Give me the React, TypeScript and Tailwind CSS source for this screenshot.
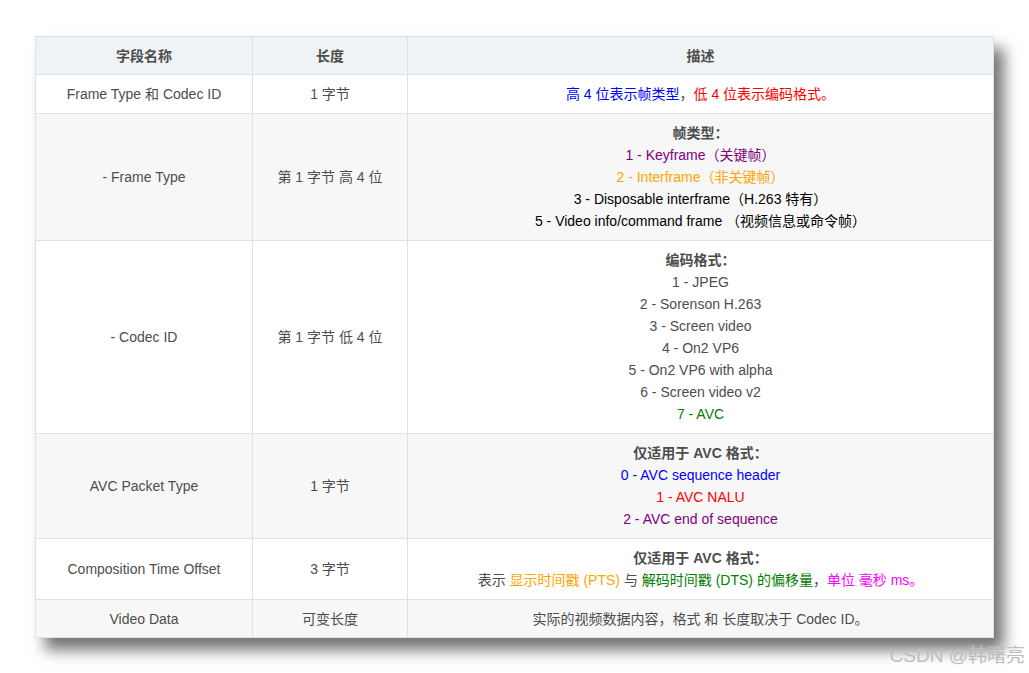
export default function App() {
  const td = "border border-[#dfe2e5] text-center align-middle px-3";
  return (
    <div className="w-[1029px] h-[673px] bg-white relative" style={{ fontFamily: '"Liberation Sans", "Noto Sans CJK SC", sans-serif' }}>
      <div className="absolute left-[35px] top-[36px] w-[959px] shadow-[10px_12px_14px_rgba(0,0,0,0.55)]">
        <table className="w-full border-collapse text-[14px] leading-[22px] text-[#4d4d4d]">
          <colgroup>
            <col className="w-[217px]" />
            <col className="w-[155px]" />
            <col />
          </colgroup>
          <thead>
            <tr className="bg-[#eff3f5] h-[38px] font-bold">
              <th className={td}>字段名称</th>
              <th className={td}>长度</th>
              <th className={td}>描述</th>
            </tr>
          </thead>
          <tbody>
            <tr className="bg-white h-[39px]">
              <td className={td}>Frame Type 和 Codec ID</td>
              <td className={td}>1 字节</td>
              <td className={td}><span className="text-[#0000ff]">高 4 位表示帧类型</span>，<span className="text-[#ff0000]">低 4 位表示编码格式。</span></td>
            </tr>
            <tr className="bg-[#f7f7f7] h-[127px]">
              <td className={td}>- Frame Type</td>
              <td className={td}>第 1 字节 高 4 位</td>
              <td className={td}>
                <div className="font-bold">帧类型：</div>
                <div className="text-[#800080]">1 - Keyframe（关键帧）</div>
                <div className="text-[#ffa500]">2 - Interframe（非关键帧）</div>
                <div className="text-black">3 - Disposable interframe（H.263 特有）</div>
                <div className="text-black">5 - Video info/command frame （视频信息或命令帧）</div>
              </td>
            </tr>
            <tr className="bg-white h-[193px]">
              <td className={td}>- Codec ID</td>
              <td className={td}>第 1 字节 低 4 位</td>
              <td className={td}>
                <div className="font-bold">编码格式：</div>
                <div>1 - JPEG</div>
                <div>2 - Sorenson H.263</div>
                <div>3 - Screen video</div>
                <div>4 - On2 VP6</div>
                <div>5 - On2 VP6 with alpha</div>
                <div>6 - Screen video v2</div>
                <div className="text-[#008000]">7 - AVC</div>
              </td>
            </tr>
            <tr className="bg-[#f7f7f7] h-[105px]">
              <td className={td}>AVC Packet Type</td>
              <td className={td}>1 字节</td>
              <td className={td}>
                <div className="font-bold">仅适用于 AVC 格式：</div>
                <div className="text-[#0000ff]">0 - AVC sequence header</div>
                <div className="text-[#ff0000]">1 - AVC NALU</div>
                <div className="text-[#800080]">2 - AVC end of sequence</div>
              </td>
            </tr>
            <tr className="bg-white h-[61px]">
              <td className={td}>Composition Time Offset</td>
              <td className={td}>3 字节</td>
              <td className={td}>
                <div className="font-bold">仅适用于 AVC 格式：</div>
                <div>表示 <span className="text-[#ffa500]">显示时间戳 (PTS)</span> 与 <span className="text-[#008000]">解码时间戳 (DTS) 的偏移量</span>，<span className="text-[#ff00ff]">单位 毫秒 ms。</span></div>
              </td>
            </tr>
            <tr className="bg-[#f7f7f7] h-[38px]">
              <td className={td}>Video Data</td>
              <td className={td}>可变长度</td>
              <td className={td}>实际的视频数据内容，格式 和 长度取决于 Codec ID。</td>
            </tr>
          </tbody>
        </table>
      </div>
      <div className="absolute right-[4px] top-[642px] text-[19px] text-[#bdbdbd]">CSDN @韩曙亮</div>
    </div>
  );
}
